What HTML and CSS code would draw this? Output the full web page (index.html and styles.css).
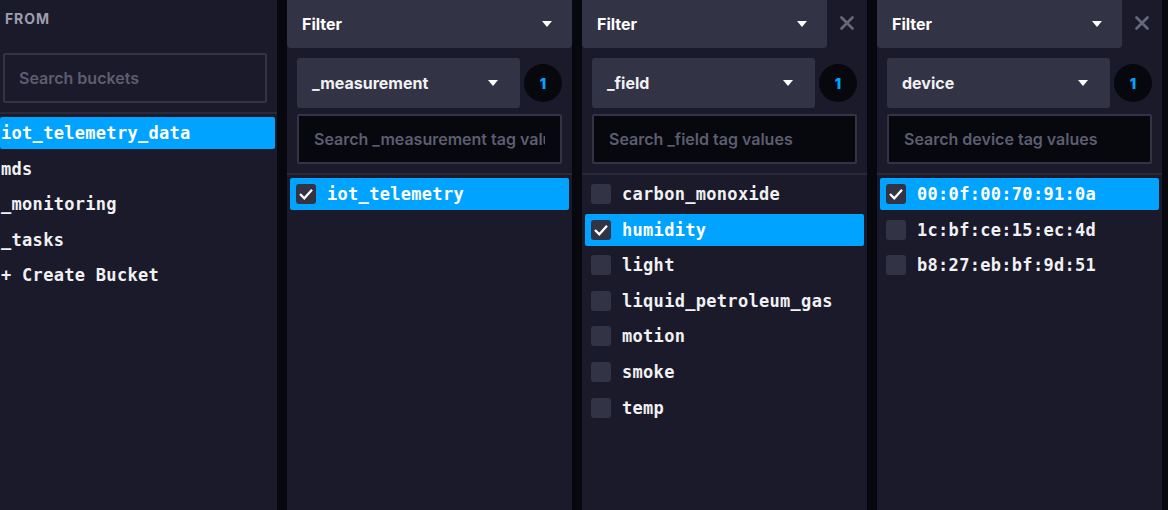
FILE: index.html
```html
<!DOCTYPE html>
<html>
<head>
<meta charset="utf-8">
<link rel="stylesheet" href="styles.css">
</head>
<body>
<div class="page">
  <section class="col col-from">
    <div class="from-label">FROM</div>
    <div class="from-search"><input class="input input-from" placeholder="Search buckets"></div>
    <div class="list list-from">
      <div class="bucket selected">iot_telemetry_data</div>
      <div class="bucket">mds</div>
      <div class="bucket">_monitoring</div>
      <div class="bucket">_tasks</div>
      <div class="bucket">+ Create Bucket</div>
    </div>
  </section>

  <section class="col col-filter">
    <div class="head">
      <div class="head-main"><span>Filter</span><svg class="caret" width="10" height="6" viewBox="0 0 10 6"><polygon points="0,0 10,0 5,6" fill="#fff"/></svg></div>
    </div>
    <div class="controls">
      <div class="select-row">
        <div class="select"><span>_measurement</span><svg class="caret" width="10" height="6" viewBox="0 0 10 6"><polygon points="0,0 10,0 5,6" fill="#fff"/></svg></div>
        <div class="badge">1</div>
      </div>
      <input class="input input-tag" placeholder="Search _measurement tag values">
    </div>
    <div class="list">
      <div class="item selected"><span class="cb on"><svg width="20" height="20" viewBox="0 0 20 20"><polyline points="4,10 8.3,14.3 16,5.8" fill="none" stroke="#fff" stroke-width="2.3"/></svg></span>iot_telemetry</div>
    </div>
  </section>

  <section class="col col-filter">
    <div class="head">
      <div class="head-main"><span>Filter</span><svg class="caret" width="10" height="6" viewBox="0 0 10 6"><polygon points="0,0 10,0 5,6" fill="#fff"/></svg></div>
      <div class="close"><svg width="14" height="14" viewBox="0 0 14 14"><path d="M1.5 1.5 L12.5 12.5 M12.5 1.5 L1.5 12.5" stroke="#68687b" stroke-width="2.6" stroke-linecap="round"/></svg></div>
    </div>
    <div class="controls">
      <div class="select-row">
        <div class="select"><span>_field</span><svg class="caret" width="10" height="6" viewBox="0 0 10 6"><polygon points="0,0 10,0 5,6" fill="#fff"/></svg></div>
        <div class="badge">1</div>
      </div>
      <input class="input input-tag" placeholder="Search _field tag values">
    </div>
    <div class="list">
      <div class="item"><span class="cb"></span>carbon_monoxide</div>
      <div class="item selected"><span class="cb on"><svg width="20" height="20" viewBox="0 0 20 20"><polyline points="4,10 8.3,14.3 16,5.8" fill="none" stroke="#fff" stroke-width="2.3"/></svg></span>humidity</div>
      <div class="item"><span class="cb"></span>light</div>
      <div class="item"><span class="cb"></span>liquid_petroleum_gas</div>
      <div class="item"><span class="cb"></span>motion</div>
      <div class="item"><span class="cb"></span>smoke</div>
      <div class="item"><span class="cb"></span>temp</div>
    </div>
  </section>

  <section class="col col-filter">
    <div class="head">
      <div class="head-main"><span>Filter</span><svg class="caret" width="10" height="6" viewBox="0 0 10 6"><polygon points="0,0 10,0 5,6" fill="#fff"/></svg></div>
      <div class="close"><svg width="14" height="14" viewBox="0 0 14 14"><path d="M1.5 1.5 L12.5 12.5 M12.5 1.5 L1.5 12.5" stroke="#68687b" stroke-width="2.6" stroke-linecap="round"/></svg></div>
    </div>
    <div class="controls">
      <div class="select-row">
        <div class="select"><span>device</span><svg class="caret" width="10" height="6" viewBox="0 0 10 6"><polygon points="0,0 10,0 5,6" fill="#fff"/></svg></div>
        <div class="badge">1</div>
      </div>
      <input class="input input-tag" placeholder="Search device tag values">
    </div>
    <div class="list">
      <div class="item selected"><span class="cb on"><svg width="20" height="20" viewBox="0 0 20 20"><polyline points="4,10 8.3,14.3 16,5.8" fill="none" stroke="#fff" stroke-width="2.3"/></svg></span>00:0f:00:70:91:0a</div>
      <div class="item"><span class="cb"></span>1c:bf:ce:15:ec:4d</div>
      <div class="item"><span class="cb"></span>b8:27:eb:bf:9d:51</div>
    </div>
  </section>
</div>
</body>
</html>
```

FILE: styles.css
```css
* { box-sizing: border-box; }
html, body { margin: 0; padding: 0; }
body {
  background: #07070e;
  width: 1168px;
  height: 510px;
  overflow: hidden;
  font-family: "Inter", "Liberation Sans", sans-serif;
  color: #f1f1f3;
}
.page {
  display: flex;
  gap: 10px;
  height: 510px;
}
.col {
  background: #1b1a2a;
  height: 510px;
  flex: none;
  display: flex;
  flex-direction: column;
}
.col-from { width: 277px; }
.col-filter { width: 285px; }

.from-label {
  font-size: 14px;
  font-weight: 700;
  color: #9e9ead;
  padding: 10px 0 0 5px;
  height: 53px;
  letter-spacing: 0.9px;
}
.from-search { padding: 0 10px 0 3px; }

.input {
  display: block;
  width: 100%;
  height: 50px;
  border-radius: 2px;
  font-family: "Inter", "Liberation Sans", sans-serif;
  font-size: 16px;
  font-weight: 600;
  color: #f1f1f3;
  outline: none;
}
.input::placeholder { color: #5d5d70; }
.input-from {
  background: #1b1a2a;
  border: 2px solid #333346;
  padding: 0 14px;
}
.input-tag {
  background: #07070e;
  border: 2px solid #333346;
  padding: 0 15px;
  margin-top: 6px;
}

.list {
  border-top: 2px solid #292939;
  padding: 3px 3px 0 3px;
  margin-top: 9px;
  font-family: "DejaVu Sans Mono", "Liberation Mono", monospace;
  font-weight: 700;
  font-size: 17px;
  letter-spacing: 0.3px;
}
.list-from { padding: 3px 2px 0 0; }

.bucket, .item {
  height: 32px;
  margin-bottom: 3.6px;
  display: flex;
  align-items: center;
  border-radius: 2px;
  color: #f1f1f3;
  white-space: nowrap;
}
.bucket { padding-left: 1px; }
.item { padding-left: 6px; gap: 11px; }
.selected { background: #00a3ff; color: #fff; }

.cb {
  width: 20px;
  height: 20px;
  border-radius: 3px;
  background: #333346;
  flex: none;
  display: flex;
}

.head {
  display: flex;
  height: 48px;
}
.head-main {
  flex: 1;
  background: #333346;
  border-radius: 0 0 4px 4px;
  display: flex;
  align-items: center;
  justify-content: space-between;
  padding: 0 20px 0 15px;
  font-size: 16px;
  font-weight: 700;
  color: #fff;
}
.close {
  width: 40px;
  display: flex;
  align-items: center;
  justify-content: center;
  padding-bottom: 2px;
}

.controls { padding: 10px 10px 0 10px; }
.select-row {
  display: flex;
  align-items: center;
  gap: 4px;
}
.select {
  flex: 1;
  height: 50px;
  background: #333346;
  border-radius: 3px;
  display: flex;
  align-items: center;
  justify-content: space-between;
  padding: 0 22px 0 15px;
  font-size: 16px;
  font-weight: 700;
  color: #f1f1f3;
}
.badge {
  width: 38px;
  height: 38px;
  border-radius: 50%;
  background: #07070e;
  color: #00a3ff;
  font-size: 14px;
  font-weight: 900;
  display: flex;
  align-items: center;
  justify-content: center;
  flex: none;
}
.caret { display: block; }
```
